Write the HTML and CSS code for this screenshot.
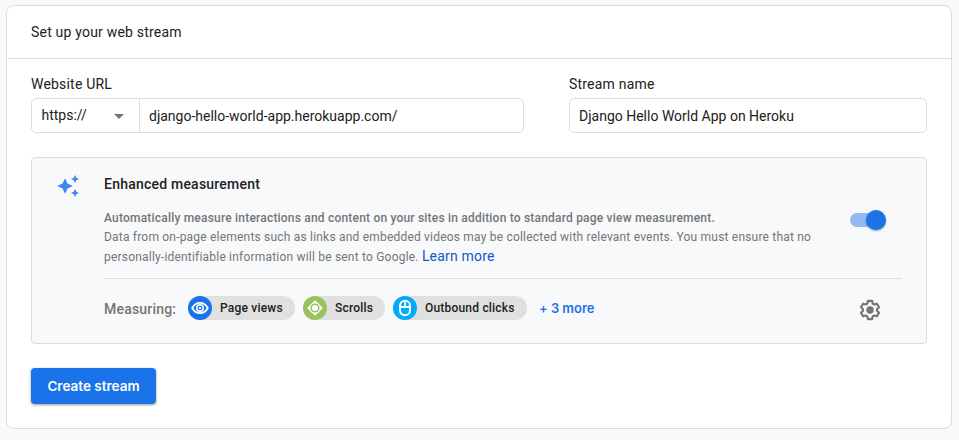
FILE: index.html
```html
<!DOCTYPE html>
<html lang="en">
<head>
<meta charset="utf-8">
<title>Set up your web stream</title>
<link rel="stylesheet" href="styles.css">
</head>
<body>
<main class="card">
  <header class="card-header"><h1>Set up your web stream</h1></header>
  <div class="card-body">
    <div class="fields">
      <div class="field url-field">
        <div class="label">Website URL</div>
        <div class="box">
          <div class="scheme"><span>https://</span><i class="arrow"></i></div>
          <div class="value url">django-hello-world-app.herokuapp.com/</div>
        </div>
      </div>
      <div class="field name-field">
        <div class="label">Stream name</div>
        <div class="box"><div class="value name">Django Hello World App on Heroku</div></div>
      </div>
    </div>
    <section class="panel">
      <svg class="sparkle" viewBox="0 0 24 24" width="24" height="24" fill="#4285f4"><path d="M9 4.200 11.500 9.500 16.800 12 11.500 14.500 9 19.800 6.500 14.500 1.200 12 6.500 9.500ZM19 1l1.350 2.650L23 5l-2.650 1.350L19 9l-1.350-2.650L15 5l2.650-1.350ZM19 15l1.350 2.650L23 19l-2.650 1.350L19 23l-1.350-2.650L15 19l2.650-1.350Z"/></svg>
      <div class="content">
        <div class="top">
          <div class="copy">
            <h2>Enhanced measurement</h2>
            <p class="lead">Automatically measure interactions and content on your sites in addition to standard page view measurement.</p>
            <p class="note">Data from on-page elements such as links and embedded videos may be collected with relevant events. You must ensure that no</p>
            <p class="note last"><span>personally-identifiable information will be sent to Google.</span> <a class="learn">Learn more</a></p>
          </div>
          <div class="toggle"><i class="knob"></i></div>
        </div>
        <div class="measuring">
          <span class="measure-label">Measuring:</span>
          <div class="chip views">
            <svg viewBox="0 0 24 24" width="24" height="24"><circle cx="12" cy="12" r="12" fill="#1a73e8"/><path d="M4.300 12C6 8.600 8.800 6.900 12 6.900s6 1.700 7.700 5.100c-1.700 3.400-4.500 5.100-7.700 5.100S6 15.400 4.300 12Z" fill="none" stroke="#fff" stroke-width="1.800"/><circle cx="12" cy="12" r="3.200" fill="none" stroke="#fff" stroke-width="1.500"/><circle cx="12" cy="12" r="1.200" fill="#fff"/></svg>
            <span>Page views</span>
          </div>
          <div class="chip scrolls">
            <svg viewBox="0 0 24 24" width="24" height="24"><circle cx="12" cy="12" r="12" fill="#97c25d"/><path d="M12 4.200 19.800 12 12 19.800 4.200 12Z" fill="#fff"/><path d="M7.700 7.700h8.600v8.600H7.700Z" fill="#fff"/><circle cx="12" cy="12" r="4.600" fill="#97c25d"/><circle cx="12" cy="12" r="3.100" fill="#fff"/></svg>
            <span>Scrolls</span>
          </div>
          <div class="chip clicks">
            <svg viewBox="0 0 24 24" width="24" height="24"><circle cx="12" cy="12" r="12" class="cyan"/><rect x="7" y="4.800" width="10" height="14.400" rx="5" fill="none" stroke="#fff" stroke-width="2"/><path d="M7 11h10M12 5v6" stroke="#fff" stroke-width="1.800"/></svg>
            <span>Outbound clicks</span>
          </div>
          <a class="more">+ 3 more</a>
          <svg class="gear" viewBox="0 0 24 24" width="24" height="24" fill="none" stroke="#757575" stroke-width="2.200" stroke-linejoin="round"><path d="M9.900 2.900h4.200l.6 2.700 1.600.9 2.600-.8 2.100 3.600-2 1.900v1.600l2 1.900-2.100 3.600-2.600-.8-1.600.9-.6 2.700H9.900l-.6-2.700-1.600-.9-2.600.8L3 14.700l2-1.900v-1.600L3 9.300l2.100-3.600 2.600.8 1.600-.9Z"/><circle cx="12" cy="12" r="3.700" fill="#757575" stroke="none"/></svg>
        </div>
      </div>
    </section>
    <button class="create" type="button"><span>Create stream</span></button>
  </div>
</main>
</body>
</html>
```
FILE: styles.css
```css
* { box-sizing: border-box; }
body {
  margin: 0;
  padding: 5px 7px 11px 6px;
  height: 440px;
  overflow: hidden;
  background: #f8f9fb;
  color: #212121;
  font: 14px/20px Roboto, sans-serif;
}
h1, h2, p { margin: 0; font-size: 14px; }
.card {
  height: 424px;
  border: 1px solid #dadce0;
  border-radius: 8px;
  background: #fff;
}
.card-header {
  height: 53px;
  padding: 16px 24px;
  border-bottom: 1px solid #dadce0;
}
h1 { font-weight: 400; letter-spacing: .2px; }
.card-body { padding: 15px 24px 0; }
.fields { display: flex; justify-content: space-between; }
.url-field { width: 493px; }
.name-field { width: 358px; }
.label { height: 24px; letter-spacing: .2px; }
.box {
  display: flex;
  height: 35px;
  border: 1px solid #dadce0;
  border-radius: 5px;
}
.scheme {
  display: flex;
  justify-content: space-between;
  width: 108px;
  padding: 6px 15px 0 9.5px;
  border-right: 1px solid #dadce0;
}
.arrow {
  width: 0;
  height: 0;
  margin-top: 9px;
  border: 5px solid transparent;
  border-top-color: #757575;
  border-bottom: 0;
}
.value { padding: 7px 9px; }
.panel {
  display: flex;
  height: 187px;
  margin-top: 24px;
  padding: 16px 24px 0;
  border: 1px solid #dadce0;
  border-radius: 4px;
  background: #f8f9fb;
}
.sparkle { flex: none; margin-right: 24px; }
.content { flex: 1; }
.top {
  display: flex;
  justify-content: space-between;
  height: 105px;
  border-bottom: 1px solid #dadce0;
}
.copy { white-space: nowrap; }
h2 { font-weight: 500; letter-spacing: .22px; }
.lead, .note {
  height: 20px;
  color: #757575;
  font-size: 12px;
  line-height: 20px;
  letter-spacing: .2px;
}
.lead { margin-top: 14px; height: 19px; font-weight: 500; }
.note.last { line-height: 18px; }
.learn { color: #1155cc; font-size: 14px; letter-spacing: .2px; }
.toggle {
  width: 34px;
  height: 14px;
  margin: 39px 18px 0 0;
  border-radius: 7px;
  background: #93b9f4;
}
.knob {
  display: block;
  width: 20px;
  height: 20px;
  margin: -3px 0 0 16px;
  border-radius: 50%;
  background: #1a73e8;
  box-shadow: 0 1px 2px rgba(0, 0, 0, .4);
}
.measuring { display: flex; height: 60px; align-items: center; white-space: nowrap; }
.measure-label { width: 84px; color: #757575; font-weight: 500; letter-spacing: .2px; }
.chip {
  display: flex;
  height: 24px;
  margin: -3px 8px 0 0;
  border-radius: 12px;
  background: #e0e0e0;
  font-size: 12px;
  font-weight: 500;
  line-height: 24px;
  letter-spacing: .2px;
}
.chip svg { margin-right: 8px; }
.views { width: 107px; }
.scrolls { width: 82px; }
.clicks { width: 134px; }
.cyan { fill: #00aaff; }
.more {
  margin-left: 4px;
  margin-top: -2px;
  color: #1a73e8;
  font-family: Inter, sans-serif;
  font-size: 13px;
  font-weight: 600;
  letter-spacing: -.05px;
}
.gear { margin: 2px 20px 0 auto; }
.create {
  display: block;
  width: 125px;
  height: 36px;
  margin-top: 24px;
  padding: 0;
  border: 0;
  border-radius: 4px;
  background: #1a73e8;
  box-shadow: 0 1px 3px rgba(0, 0, 0, .4);
  color: #fff;
  font: 600 13.5px/36px Inter, sans-serif;
}
```
